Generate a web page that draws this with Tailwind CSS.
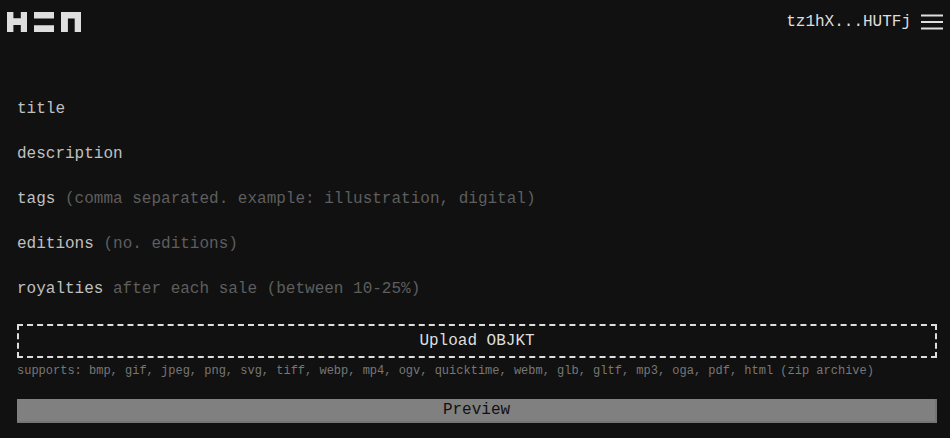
<!DOCTYPE html>
<html lang="en">
<head>
<meta charset="utf-8">
<title>hic et nunc</title>
<script src="https://cdn.jsdelivr.net/npm/@tailwindcss/browser@4"></script>
</head>
<body class="h-[438px] overflow-hidden bg-[#111] font-['Liberation_Mono',monospace] text-base leading-[18px] text-[#dedede]">
<header class="flex h-[44px] items-center justify-between pr-[7px] pl-[7px]">
  <svg class="block h-5 w-[74px]" viewBox="0 0 74 20" fill="#dedede" role="img" aria-label="hic et nunc">
    <path d="M0 0H6.4V6.2H13.8V0H20V20H13.8V13H6.4V20H0ZM27 0H47V6.6H27ZM27 13.2H47V20H27ZM54 0H74V20H67.7V6.6H60.9V20H54Z"/>
  </svg>
  <div class="flex items-center gap-[10px]">
    <span>tz1hX...HUTFj</span>
    <svg class="block h-4 w-[22px]" viewBox="0 0 22 16" stroke="#dedede" stroke-width="2">
      <path d="M0 1.5H22M0 8H22M0 14.5H22"/>
    </svg>
  </div>
</header>
<main class="flex flex-col pt-14 pr-[13px] pl-[17px]">
  <div class="flex flex-col gap-[27px] text-[#c0c0c0]">
    <div>title</div>
    <div>description</div>
    <div>tags <span class="text-[#5e5e5e]">(comma separated. example: illustration, digital)</span></div>
    <div>editions <span class="text-[#5e5e5e]">(no. editions)</span></div>
    <div>royalties <span class="text-[#5e5e5e]">after each sale (between 10-25%)</span></div>
  </div>
  <button class="mt-[26px] flex h-[34px] items-center justify-center border-2 border-dashed border-[#dedede]">Upload OBJKT</button>
  <p class="mt-1 h-[18px] text-xs leading-[18px] whitespace-nowrap text-[#777]">supports: bmp, gif, jpeg, png, svg, tiff, webp, mp4, ogv, quicktime, webm, glb, gltf, mp3, oga, pdf, html (zip archive)</p>
  <button class="mt-[19px] flex h-6 items-center justify-center border-r-2 border-b-2 border-[#757575] bg-[#808080] pl-px text-[#111]">Preview</button>
</main>
</body>
</html>
